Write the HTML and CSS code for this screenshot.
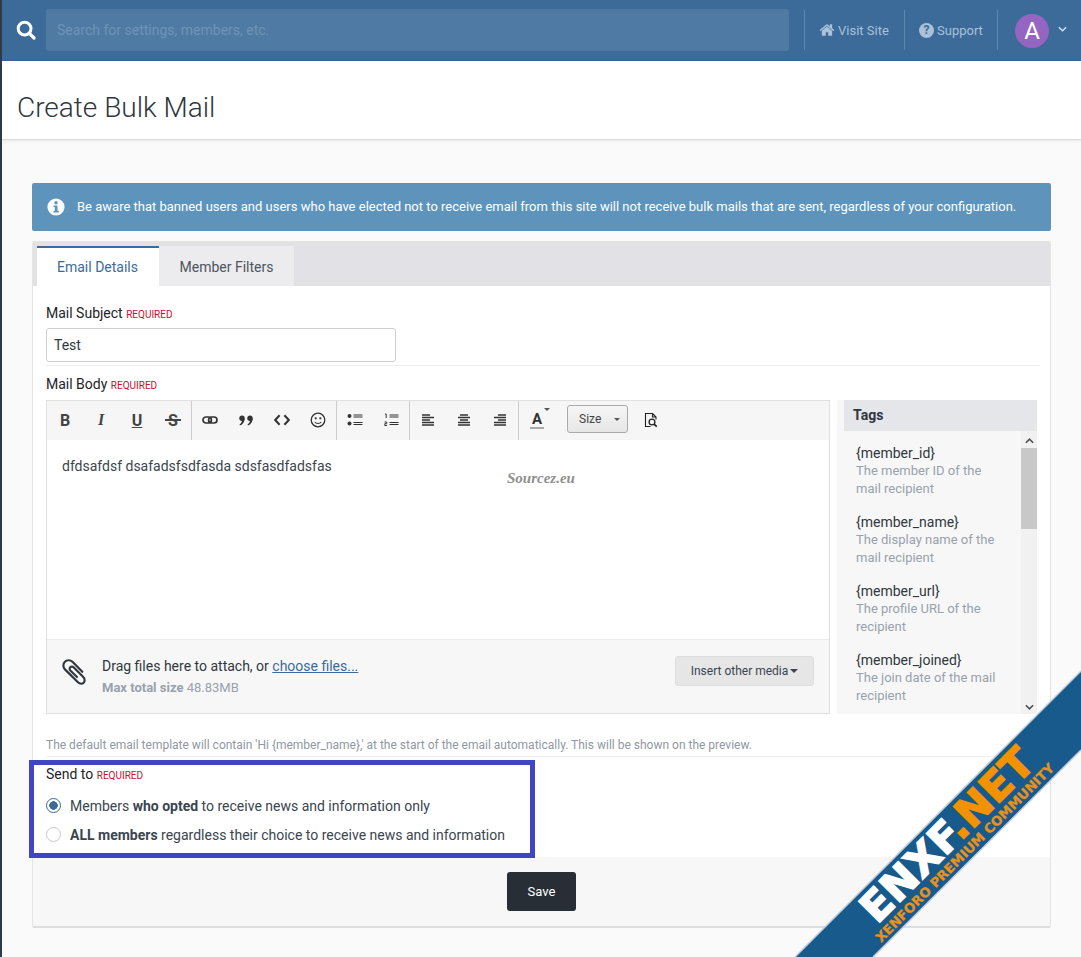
FILE: index.html
```html
<!DOCTYPE html>
<html lang="en">
<head>
<meta charset="utf-8">
<title>Create Bulk Mail</title>
<link rel="stylesheet" href="styles.css">
</head>
<body>
<div class="page">
  <header class="topbar">
    <svg class="search-icon" viewBox="0 0 20 20"><circle cx="8.6" cy="8.6" r="6.4" fill="none" stroke="#fff" stroke-width="3"/><path d="M13.4 13.4l4.6 4.6" stroke="#fff" stroke-width="3.2" stroke-linecap="round"/></svg>
    <div class="search-box">Search for settings, members, etc.</div>
    <nav class="top-nav">
      <a class="nav-item nav-visit"><svg class="nav-icon-home" viewBox="0 0 1792 1792"><path fill="#a9c1d9" d="M1472 992v480q0 26-19 45t-45 19h-384v-384h-256v384h-384q-26 0-45-19t-19-45v-480q0-1 .5-3t.5-3l575-474 575 474q1 2 1 6zm223-69l-62 74q-8 9-21 11h-3q-13 0-21-7l-692-577-692 577q-12 8-24 7-13-2-21-11l-62-74q-8-10-7-23.5t11-21.5l719-599q32-26 76-26t76 26l244 204v-195q0-14 9-23t23-9h192q14 0 23 9t9 23v408l219 182q10 8 11 21.5t-7 23.5z"/></svg>Visit Site</a>
      <a class="nav-item nav-support"><span class="q-circle">?</span>Support</a>
      <div class="nav-item nav-user">
        <span class="avatar">A</span>
        <svg class="chev" viewBox="0 0 10 6"><path d="M1 1l4 4 4-4" fill="none" stroke="#dbe6f0" stroke-width="1.5"/></svg>
      </div>
    </nav>
  </header>

  <div class="title-bar"><h1>Create Bulk Mail</h1></div>

  <main class="main">
    <div class="notice">
      <svg class="notice-icon" viewBox="0 0 18 18"><circle cx="9" cy="9" r="8.6" fill="#fff"/><circle cx="9" cy="4.7" r="1.7" fill="#5e94bb"/><path d="M6.5 7.4h4v5.4h1.3v1.7H6.5v-1.7h1.3V9.1H6.5z" fill="#5e94bb"/></svg>
      <span class="notice-text">Be aware that banned users and users who have elected not to receive email from this site will not receive bulk mails that are sent, regardless of your configuration.</span>
    </div>

    <section class="block">
      <div class="tabs">
        <span class="tab tab-active">Email Details</span>
        <span class="tab">Member Filters</span>
      </div>
      <div class="block-body">
        <div class="row row-subject">
          <label class="label">Mail Subject <span class="req">REQUIRED</span></label>
          <div class="input">Test</div>
        </div>
        <div class="row row-body">
          <label class="label">Mail Body <span class="req">REQUIRED</span></label>
          <div class="editor-wrap">
            <div class="editor">
              <div class="toolbar">
                <span class="tb tb-text tb-b">B</span>
                <span class="tb tb-text tb-i">I</span>
                <span class="tb tb-text tb-u">U</span>
                <span class="tb tb-text tb-s">S</span>
                <span class="tb-sep"></span>
                <span class="tb"><svg class="ic" viewBox="0 0 16 16"><rect x="1" y="5" width="8.4" height="6" rx="3" fill="none" stroke="#333" stroke-width="1.7"/><rect x="6.6" y="5" width="8.4" height="6" rx="3" fill="none" stroke="#333" stroke-width="1.7"/></svg></span>
                <span class="tb"><svg class="ic" viewBox="0 0 16 16"><circle cx="4" cy="6.200" r="2.700" fill="#333"/><path d="M6.700 6.200c0 3.500-1.800 6.200-4.700 7.300l-.5-1c1.800-1.100 2.500-2.600 2.500-4.500z" fill="#333"/><circle cx="12" cy="6.200" r="2.700" fill="#333"/><path d="M14.700 6.200c0 3.500-1.800 6.200-4.700 7.300l-.5-1c1.800-1.100 2.500-2.600 2.500-4.500z" fill="#333"/></svg></span>
                <span class="tb"><svg class="ic" viewBox="0 0 16 16"><path d="M5.600 3.200L1.200 8l4.400 4.800M10.400 3.200L14.800 8l-4.400 4.800" fill="none" stroke="#333" stroke-width="2"/></svg></span>
                <span class="tb"><svg class="ic" viewBox="0 0 16 16"><circle cx="8" cy="8" r="6.800" fill="none" stroke="#333" stroke-width="1.300"/><circle cx="5.700" cy="6.300" r="1.100" fill="#333"/><circle cx="10.300" cy="6.300" r="1.100" fill="#333"/><path d="M4.800 10c1.600 2 4.800 2 6.400 0" fill="none" stroke="#333" stroke-width="1.200"/></svg></span>
                <span class="tb-sep"></span>
                <span class="tb"><svg class="ic" viewBox="0 0 16 16"><circle cx="2.500" cy="4" r="2" fill="#333"/><circle cx="2.500" cy="11.500" r="2" fill="#333"/><path d="M6.500 3h9M6.500 5h9M6.500 10.500h9M6.500 12.500h9" stroke="#333" stroke-width="1"/></svg></span>
                <span class="tb"><svg class="ic" viewBox="0 0 16 16"><path d="M2 2h1.200v4M1.500 10h2.200v1.700H1.800v1.800h2.300M6.500 3h9M6.500 5h9M6.500 10.500h9M6.500 12.500h9" fill="none" stroke="#333" stroke-width="1"/></svg></span>
                <span class="tb-sep"></span>
                <span class="tb"><svg class="ic" viewBox="0 0 16 16"><path d="M2 3h8M2 5.500h12M2 8h8M2 10.500h12M2 13h12" stroke="#333" stroke-width="1.500"/></svg></span>
                <span class="tb"><svg class="ic" viewBox="0 0 16 16"><path d="M4 3h8M2 5.500h12M4 8h8M2 10.500h12M2 13h12" stroke="#333" stroke-width="1.500"/></svg></span>
                <span class="tb"><svg class="ic" viewBox="0 0 16 16"><path d="M6 3h8M2 5.500h12M6 8h8M2 10.500h12M2 13h12" stroke="#333" stroke-width="1.500"/></svg></span>
                <span class="tb-sep"></span>
                <span class="tb tb-color"><span class="tb-a">A</span><span class="tb-caret"></span></span>
                <span class="size-btn">Size<span class="size-caret"></span></span>
                <span class="tb tb-preview"><svg class="ic" viewBox="0 0 16 16"><path d="M9.500 1.500H2.500v13h5M9.500 1.500l3.500 3.500v2.500M9.500 1.500V5H13" fill="none" stroke="#222" stroke-width="1.100"/><circle cx="9" cy="10" r="2.900" fill="none" stroke="#222" stroke-width="1.300"/><path d="M11 12.200l2.800 2.500" stroke="#222" stroke-width="1.800"/></svg></span>
              </div>
              <div class="editor-text">
                <p class="editor-line">dfdsafdsf dsafadsfsdfasda sdsfasdfadsfas</p>
                <span class="watermark">Sourcez.eu</span>
              </div>
              <div class="attach">
                <svg class="clip" viewBox="0 0 1792 1792"><path fill="#30373f" d="M1596 1385q0 117-79 196t-196 79q-135 0-235-100l-777-776q-113-115-113-271 0-159 110-270t269-111q158 0 273 113l605 606q10 10 10 22 0 16-30.500 46.500t-46.500 30.500q-13 0-23-10l-606-607q-79-77-181-77-106 0-179 75t-73 181q0 105 76 181l776 777q63 63 145 63 64 0 106-42t42-106q0-82-63-145l-581-581q-26-24-60-24-29 0-48 19t-19 48q0 32 25 59l410 410q10 10 10 22 0 16-31 47t-47 31q-12 0-22-10l-410-410q-63-61-63-149 0-82 57-139t139-57q88 0 149 63l581 581q100 98 100 235z"/></svg>
                <div class="attach-text">
                  <div class="attach-line">Drag files here to attach, or <a class="link">choose files...</a></div>
                  <div class="attach-size"><b>Max total size</b> 48.83MB</div>
                </div>
                <span class="media-btn">Insert other media<span class="media-caret"></span></span>
              </div>
            </div>
            <aside class="tags">
              <h3 class="tags-head">Tags</h3>
              <div class="tags-scroll">
                <ul class="tags-list">
                  <li><span class="tag-name">{member_id}</span><span class="tag-desc">The member ID of the mail recipient</span></li>
                  <li><span class="tag-name">{member_name}</span><span class="tag-desc">The display name of the mail recipient</span></li>
                  <li><span class="tag-name">{member_url}</span><span class="tag-desc">The profile URL of the recipient</span></li>
                  <li><span class="tag-name">{member_joined}</span><span class="tag-desc">The join date of the mail recipient</span></li>
                </ul>
                <div class="scrollbar">
                  <svg class="sb-arrow" viewBox="0 0 10 6"><path d="M1 5l4-4 4 4" fill="none" stroke="#505050" stroke-width="1.800"/></svg>
                  <div class="sb-track"><div class="sb-thumb"></div></div>
                  <svg class="sb-arrow" viewBox="0 0 10 6"><path d="M1 1l4 4 4-4" fill="none" stroke="#505050" stroke-width="1.800"/></svg>
                </div>
              </div>
            </aside>
          </div>
          <p class="hint">The default email template will contain 'Hi {member_name},' at the start of the email automatically. This will be shown on the preview.</p>
        </div>
        <div class="row row-send">
          <label class="label">Send to <span class="req">REQUIRED</span></label>
          <div class="radio-line radio-first"><span class="radio radio-on"></span><span>Members <b>who opted</b> to receive news and information only</span></div>
          <div class="radio-line"><span class="radio"></span><span><b>ALL members</b> regardless their choice to receive news and information</span></div>
        </div>
      </div>
      <div class="block-foot"><span class="save">Save</span></div>
    </section>
  </main>

  <div class="frame"></div>

  <svg class="ribbon" viewBox="0 0 290 290">
    <polygon points="0,287 286,1 286,80 78,287" fill="#185a8c"/>
    <path d="M0 287L286 1M78 287L286 80" stroke="#c3ccd4" stroke-width="1.500" fill="none"/>
    <text class="rb-main" x="0" y="0" transform="translate(162 175) rotate(-45)" text-anchor="middle" textLength="226" lengthAdjust="spacingAndGlyphs"><tspan class="rb-white">ENXF</tspan><tspan class="rb-orange">.NET</tspan></text>
    <text class="rb-sub" x="0" y="0" transform="translate(173 186) rotate(-45)" text-anchor="middle" textLength="246" lengthAdjust="spacingAndGlyphs">XENFORO PREMIUM COMMUNITY</text>
  </svg>
</div>
</body>
</html>
```
FILE: styles.css
```css
* { box-sizing: border-box; }
html, body { margin: 0; padding: 0; height: 957px; overflow: hidden; }
body { font-family: Roboto, "Liberation Sans", sans-serif; font-size: 14px; color: #30373f; background: #fafafa; }
.page { position: relative; height: 957px; border-left: 2px solid #2c3a49; overflow: hidden; }

.topbar { display: flex; align-items: center; height: 61px; background: #3c6a99; border-bottom: 1px solid #386491; }
.search-icon { width: 20px; height: 20px; margin-left: 14px; flex: none; }
.search-box { width: 743px; height: 42px; margin-left: 10px; padding-left: 11px; line-height: 42px; font-size: 14px; color: #6f94b6; background: #4e7aa3; border-radius: 3px; flex: none; }
.top-nav { display: flex; align-items: center; margin-left: 15px; }
.nav-item { display: flex; align-items: center; height: 40px; border-left: 1px solid #6187ac; color: #a9c1d9; font-size: 13px; }
.nav-visit { width: 100px; padding-left: 14px; }
.nav-icon-home { width: 16px; height: 16px; margin-right: 3px; }
.nav-support { width: 93px; padding-left: 14px; }
.q-circle { width: 15px; height: 15px; margin-right: 3px; border-radius: 50%; background: #a9c1d9; color: #3c6a99; font-size: 12px; font-weight: 700; line-height: 15px; text-align: center; }
.nav-user { padding-left: 17px; }
.avatar { width: 34px; height: 34px; margin-top: 2px; border-radius: 50%; background: #9565c2; color: #fff; font-size: 24px; line-height: 34px; text-align: center; }
.chev { width: 9px; height: 6px; margin-left: 9px; margin-bottom: 3px; }

.title-bar { height: 79px; background: #fff; border-bottom: 1px solid #dcdcdc; box-shadow: 0 1px 3px rgba(0,0,0,.08); padding-left: 15px; }
h1 { margin: 0; font-size: 28px; font-weight: 300; line-height: 94px; height: 78px; color: #30373f; }

.main { padding: 43px 30px 0 30px; }
.notice { display: flex; align-items: center; height: 48px; padding-left: 15px; background: #5e94bb; color: #fff; font-size: 13px; border-radius: 2px; margin-bottom: 10px; }
.notice-icon { width: 18px; height: 18px; margin-right: 12px; flex: none; }
.notice-text { margin-top: -2px; }

.block { border: 1px solid #e4e4e4; border-bottom: 2px solid #dedede; border-radius: 2px; background: #fff; }
.tabs { display: flex; height: 44px; padding: 4px 0 0 4px; background: #e2e2e6; }
.tab { width: 135px; height: 40px; line-height: 42px; text-align: center; color: #4c5560; font-size: 14px; background: #ececee; }
.tab-active { width: 122px; padding-right: 1px; background: #fff; border-top: 2px solid #3c6a99; color: #3c6a99; line-height: 38px; }

.block-body { height: 571px; padding: 0 10px 0 13px; }
.label { display: block; font-size: 14px; line-height: 18px; color: #1d2329; }
.req { font-size: 10px; color: #c8102e; }
.row-subject { padding-top: 18px; height: 80px; border-bottom: 1px solid #eee; }
.input { width: 350px; height: 34px; margin-top: 4px; padding-left: 7px; line-height: 32px; border: 1px solid #d0d0d0; border-radius: 3px; color: #30373f; font-size: 14px; }
.row-body { padding-top: 9px; height: 391px; border-bottom: 1px solid #eee; }
.row-body .label { margin-bottom: 5px; }
.editor-wrap { display: flex; }
.editor { width: 784px; height: 314px; border: 1px solid #e0e0e0; display: flex; flex-direction: column; flex: none; }
.toolbar { display: flex; align-items: flex-start; height: 39px; background: #f6f6f6; flex: none; }
.tb { display: flex; align-items: center; justify-content: center; width: 36px; height: 38px; color: #444; flex: none; }
.tb-text { font-size: 16px; font-weight: 700; }
.tb-i { font-style: italic; font-family: "Liberation Serif", serif; }
.tb-u { text-decoration: underline; }
.tb-s { position: relative; }
.tb-s::after { content: ""; position: absolute; left: 10px; top: 18px; width: 16px; height: 2px; background: #444; }
.tb-sep { width: 1px; height: 39px; background: #ccc; flex: none; }
.ic { width: 16px; height: 16px; }
.tb-color { position: relative; }
.tb-a { font-size: 15px; font-weight: 700; color: #333; border-bottom: 2px solid #aaa; line-height: 15px; padding: 0 2px; }
.tb-caret { position: absolute; right: 5px; top: 7px; border: 3px solid transparent; border-top-color: #555; }
.size-btn { display: flex; align-items: center; width: 61px; height: 28px; margin: 4px 0 0 12px; padding-left: 11px; font-size: 12px; color: #444; border: 1px solid #aaa; border-radius: 3px; background: linear-gradient(#f6f6f6, #e6e6e6); flex: none; }
.size-caret { margin-left: 13px; margin-top: 3px; border: 3px solid transparent; border-top-color: #555; }
.tb-preview { margin-left: 5px; }

.editor-text { position: relative; flex: 1; background: #fff; padding: 17px 15px; }
.editor-line { margin: 0; font-size: 14px; line-height: 18px; color: #3a4550; }
.watermark { position: absolute; left: 460px; top: 30px; font-family: "Liberation Serif", serif; font-style: italic; font-weight: 700; font-size: 15px; color: #8f8f8f; }

.attach { display: flex; align-items: flex-start; height: 74px; background: #f7f7f7; border-top: 1px solid #eaeaea; padding: 0 15px 0 12px; flex: none; }
.clip { width: 30px; height: 30px; margin-top: 17px; margin-right: 13px; flex: none; }
.attach-text { flex: 1; padding-top: 16px; }
.attach-line { font-size: 14px; line-height: 20px; color: #30373f; }
.link { color: #3c6a99; text-decoration: underline; }
.attach-size { font-size: 13px; line-height: 18px; margin-top: 3px; color: #98a2ad; }
.media-btn { display: flex; align-items: center; justify-content: center; width: 139px; height: 30px; margin-top: 16px; border-radius: 3px; background: #e6e6e6; border: 1px solid #dedede; font-size: 12px; color: #3a4550; }
.media-caret { margin-left: 2px; margin-top: 3px; border: 4px solid transparent; border-top-color: #3a4550; }

.tags { width: 200px; margin-left: 7px; height: 314px; background: #f7f7f7; display: flex; flex-direction: column; flex: none; }
.tags-head { margin: 0 0 0 7px; height: 31px; padding-left: 9px; line-height: 31px; background: #e5e6ea; font-size: 14px; font-weight: 700; color: #30373f; flex: none; }
.tags-scroll { display: flex; flex: 1; overflow: hidden; }
.tags-list { list-style: none; margin: 0; padding: 13px 0 0 19px; flex: 1; }
.tags-list li { margin-bottom: 15px; width: 146px; }
.tag-name { display: block; font-size: 14px; line-height: 18px; color: #30373f; }
.tag-desc { display: block; font-size: 13px; line-height: 18px; color: #98a2ad; }
.scrollbar { width: 16px; display: flex; flex-direction: column; background: #f1f1f1; flex: none; }
.sb-arrow { width: 9px; height: 6px; margin: 7px auto 4px; flex: none; }
.sb-track { flex: 1; }
.sb-thumb { height: 81px; background: #c8c8c8; }

.hint { margin: 22px 0 0; font-size: 12px; line-height: 18px; color: #8f98a3; }
.row-send { padding-top: 8px; }
.radio-line { display: flex; align-items: center; height: 29px; font-size: 14px; color: #3a4550; }
.radio-first { margin-top: 6px; }
.radio { width: 15px; height: 15px; margin-right: 9px; border-radius: 50%; border: 1px solid #c8c8c8; background: #fff; flex: none; }
.radio-on { border-color: #3c6a99; background: radial-gradient(circle, #3c6a99 0 4px, #fff 4.500px); }

.block-foot { display: flex; justify-content: center; align-items: flex-start; height: 69px; padding-top: 15px; background: #f7f7f7; }
.save { width: 69px; height: 39px; line-height: 39px; text-align: center; background: #272e36; color: #fff; font-size: 13px; border-radius: 3px; }

.frame { position: absolute; left: 27px; top: 760px; width: 506px; height: 98px; border: 5px solid #4045c6; pointer-events: none; }

.ribbon { position: absolute; left: 793px; top: 670px; width: 290px; height: 290px; }
.rb-main { font-family: "DejaVu Sans", sans-serif; font-weight: 700; font-size: 41px; stroke-width: 1.500; }
.rb-white { fill: #fff; stroke: #fff; }
.rb-orange { fill: #f39200; stroke: #f39200; }
.rb-sub { font-family: "DejaVu Sans", sans-serif; font-weight: 700; font-size: 13px; fill: #e8921a; stroke: #e8921a; stroke-width: .3; }
```
